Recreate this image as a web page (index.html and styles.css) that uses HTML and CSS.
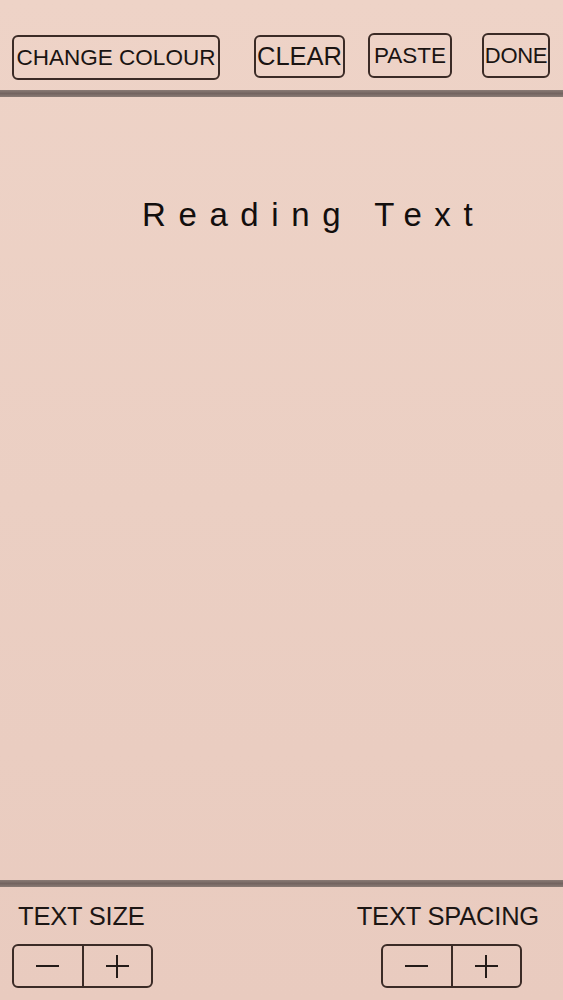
FILE: index.html
```html
<!DOCTYPE html>
<html>
<head>
<meta charset="utf-8">
<link rel="stylesheet" href="styles.css">
</head>
<body>
<div class="app">
  <header class="toolbar">
    <button class="btn btn-colour">CHANGE COLOUR</button>
    <button class="btn btn-clear">CLEAR</button>
    <button class="btn btn-paste">PASTE</button>
    <button class="btn btn-done">DONE</button>
  </header>
  <div class="rule"></div>
  <main class="reader">
    <p class="reading-text">Reading Text</p>
  </main>
  <div class="rule"></div>
  <footer class="controls">
    <div class="control">
      <div class="control-label">TEXT SIZE</div>
      <div class="stepper">
        <span class="step"><span class="minus"></span></span>
        <span class="step"><span class="plus"></span></span>
      </div>
    </div>
    <div class="control control-right">
      <div class="control-label">TEXT SPACING</div>
      <div class="stepper">
        <span class="step"><span class="minus"></span></span>
        <span class="step"><span class="plus"></span></span>
      </div>
    </div>
  </footer>
</div>
</body>
</html>
```
FILE: styles.css
```css
html, body {
  margin: 0;
  padding: 0;
}
body {
  background: #ebcfc3;
  font-family: "Liberation Sans", Arial, sans-serif;
  color: #1c1614;
}
.app {
  height: 1000px;
  display: flex;
  flex-direction: column;
  background: linear-gradient(180deg, #eed3c7 0%, #ebcfc3 50%, #e9cbbf 100%);
}
.toolbar {
  display: flex;
  align-items: flex-start;
  height: 90px;
  padding: 33px 0 0 12px;
  box-sizing: border-box;
}
.btn {
  font-family: "Liberation Sans", Arial, sans-serif;
  background: transparent;
  border: 2px solid #3b2b26;
  border-radius: 6px;
  color: #1a1412;
  font-size: 22.5px;
  padding: 0;
  height: 45px;
  display: flex;
  align-items: center;
  justify-content: center;
  box-sizing: border-box;
  white-space: nowrap;
}
.btn-colour {
  width: 208px;
  margin-top: 2px;
}
.btn-clear {
  width: 91px;
  height: 43px;
  margin-left: 34px;
  margin-top: 2px;
  font-size: 25.5px;
}
.btn-paste {
  width: 84px;
  margin-left: 23px;
}
.btn-done {
  width: 68px;
  margin-left: 30px;
  font-size: 22px;
  letter-spacing: -0.3px;
}
.rule {
  height: 7px;
  background: linear-gradient(180deg, #8a7b75 0%, #736460 50%, #8a7b75 100%);
}
.reader {
  flex: 1;
}
.reading-text {
  margin: 98px 0 0 0;
  padding-left: 142px;
  font-size: 33px;
  letter-spacing: 12.6px;
  line-height: 40px;
  color: #120e0d;
}
.controls {
  height: 113px;
  display: flex;
  justify-content: space-between;
  padding: 0 41px 0 12px;
  box-sizing: border-box;
}
.control {
  display: flex;
  flex-direction: column;
  align-items: flex-start;
}
.control-right {
  align-items: flex-end;
}
.control-label {
  font-size: 25.5px;
  line-height: 28px;
  margin-top: 15px;
  padding-left: 6px;
  letter-spacing: -0.2px;
}
.control-right .control-label {
  padding-left: 0;
  margin-right: -17px;
}
.stepper {
  margin-top: 14px;
  display: flex;
  width: 141px;
  height: 44px;
  border: 2px solid #3b2b26;
  border-radius: 6px;
  box-sizing: border-box;
}
.step {
  flex: 1;
  position: relative;
}
.step + .step {
  border-left: 2px solid #3b2b26;
}
.minus, .plus {
  position: absolute;
  left: 50%;
  top: 50%;
  width: 23px;
  height: 2px;
  margin-left: -11.5px;
  margin-top: -1px;
  background: #241b18;
}
.plus::after {
  content: "";
  position: absolute;
  left: 10.5px;
  top: -10.5px;
  width: 2px;
  height: 23px;
  background: #241b18;
}
```
